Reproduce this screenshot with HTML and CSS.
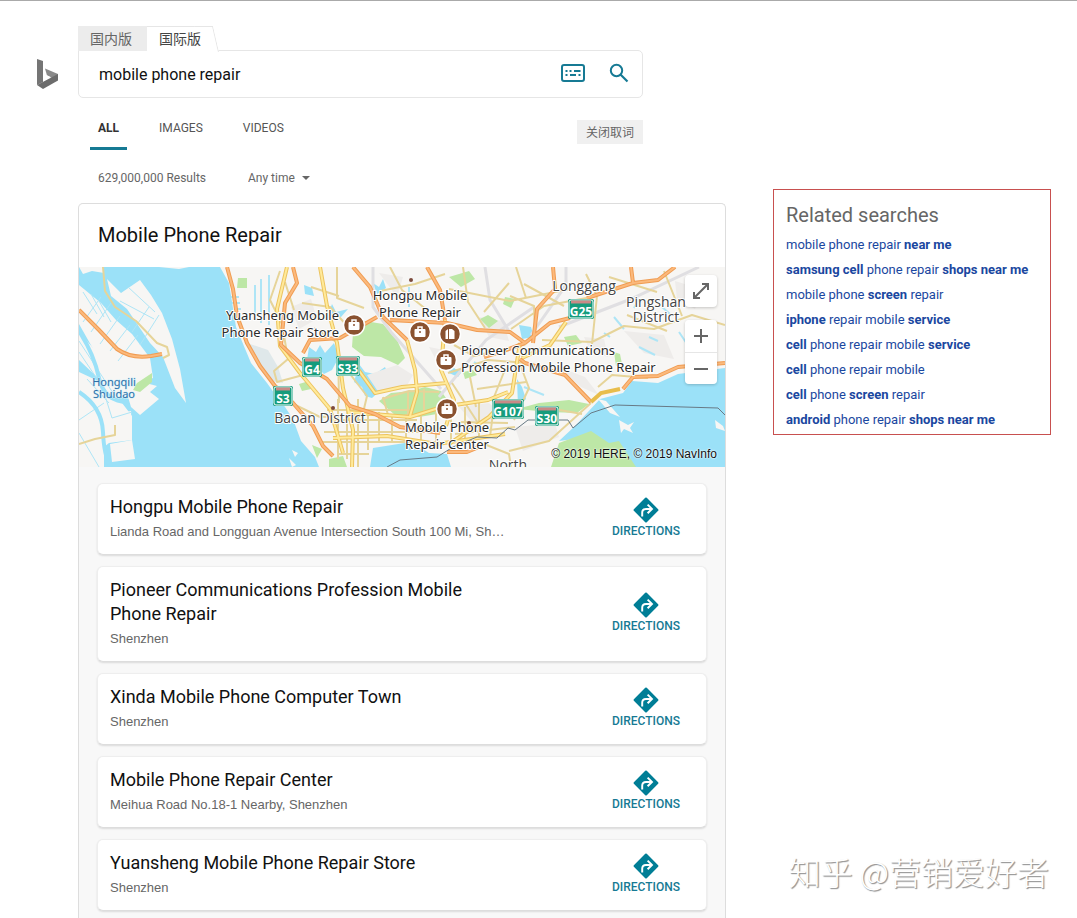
FILE: index.html
```html
<!DOCTYPE html>
<html lang="en">
<head>
  <meta charset="UTF-8">
  <meta name="viewport" content="width=device-width, initial-scale=1.0">
  <title>mobile phone repair - Bing</title>
  <link rel="stylesheet" href="styles.css">
</head>
<body>
  <!-- Shared symbols -->
  <svg class="symbols" aria-hidden="true">
    <symbol id="directions" viewBox="0 0 24 24">
      <path d="M12 1.500L22.500 12 12 22.500 1.500 12z" fill="#007e96" stroke="#007e96" stroke-width="2" stroke-linejoin="round"/>
      <path d="M8.500 18v-3.500q0-3.500 3.500-3.500h5M13.500 7l4 4-4 4" fill="none" stroke="#fff" stroke-width="1.800"/>
    </symbol>
    <symbol id="bag" viewBox="-12 -12 24 24">
      <circle r="10.500" fill="#8a5230" stroke="#fff" stroke-width="1.500"/>
      <path d="M-2-3v-2h4v2" fill="none" stroke="#fff" stroke-width="1.500"/>
      <rect x="-5.500" y="-3" width="11" height="8" rx="1" fill="#fff"/>
      <path d="M-1 0h2" stroke="#8a5230" stroke-width="1.500"/>
    </symbol>
    <symbol id="shop" viewBox="-12 -12 24 24">
      <circle r="10.500" fill="#8a5230" stroke="#fff" stroke-width="1.500"/>
      <path d="M-4.500 5v-8l2.500-2v10zM-1 5v-10h3l2.500 2v8z" fill="#fff"/>
    </symbol>
  </svg>

  <div class="page">
    <a class="logo" href="#" aria-label="Bing">
      <svg width="22" height="30" viewBox="0 0 22 30">
        <path d="M0 0l6 2v21l-6 3z" fill="#757575"/>
        <path d="M8 9.500l13 5.500v6L14 18.500l-4-2z" fill="#8a8a8a"/>
        <path d="M0 26l21-11v6.500L6 30z" fill="#6c6c6c"/>
        <path d="M6 22.500l7.500-4.500-4-2z" fill="#fff"/>
      </svg>
    </a>

    <main class="main">
      <!-- Search -->
      <div class="region-tabs">
        <a class="region-tab" href="#">国内版</a>
        <a class="region-tab active" href="#">国际版</a>
      </div>
      <form class="search-box">
        <input type="text" class="search-input" value="mobile phone repair" aria-label="Search">
        <button type="button" class="icon-btn" aria-label="Keyboard">
          <svg width="24" height="18" viewBox="0 0 24 18">
            <rect x="1" y="1" width="22" height="16" rx="2" fill="none" stroke="#167a94" stroke-width="2"/>
            <path d="M4.500 7h2M8.500 7h2M13 7h6.500M4.500 11h2M9 11h6M17.500 11h2" stroke="#167a94" stroke-width="2"/>
          </svg>
        </button>
        <button type="button" class="icon-btn" aria-label="Search">
          <svg width="20" height="20" viewBox="0 0 20 20" fill="none" stroke="#167a94">
            <circle cx="7.500" cy="7.500" r="5.700" stroke-width="2"/>
            <path d="M11.500 11.500l7 7" stroke-width="2.200"/>
          </svg>
        </button>
      </form>

      <div class="nav-row">
        <nav class="nav">
          <a class="active" href="#">ALL</a>
          <a href="#">IMAGES</a>
          <a href="#">VIDEOS</a>
        </nav>
        <button type="button" class="word-btn">关闭取词</button>
      </div>

      <div class="filters">
        <span>629,000,000 Results</span>
        <div class="time-filter">
          <select aria-label="Time">
            <option>Any time</option>
            <option>Past day</option>
          </select>
        </div>
      </div>

      <!-- Local results -->
      <section class="local">
        <h2>Mobile Phone Repair</h2>
        <div class="map">
          <svg class="map-canvas" viewBox="0 0 646 200" preserveAspectRatio="xMidYMid slice" role="img" aria-label="Map">
            <rect width="646" height="200" fill="#f7f6f4"/>

            <!-- water -->
            <g fill="#9be1f8">
              <path d="M0 0H141L150 16 157 60 172 96 188 116 198 130 206 140 214 152 222 174 236 190 240 200H0z"/>
              <path d="M230 80l7 5 4-7 5 8 9-10 5 14-7 13-8 4-6-6-7 6-4-14zM280 97l6 8 10 2 10-7 3 7-9 8 2 8-9 8-7-2-3-9-8-5zM253 37l4 8 12-3-7 8-13-2zM294 16l6 4 4-8 3 9-9 6zM440 58l12 2 3 10-12 2z"/>
              <path d="M291 200l3-19 38-6 18 11 18 1 4 13z"/>
              <path d="M480 174l16-15 25-27 23-6 9-12 26 2 20-9 47-6v99H555l-44-30z"/>
              <path d="M371 95l5 7 8 1-5 7-9-4zM438 112l5 8 4 12-8 8zM225 18l8 3 2 8-9-2z"/>
            </g>

            <!-- western delta -->
            <g fill="#f7f6f4">
              <path d="M0 0H80l20 2 10-2H25v6l-12-2-9 3zM0 18l22 18 15 17 16 14 18 24 3 20-11 4 15 4-7 6 9 7-19 16-9-8-5-17-18-15-12-21L0 57z"/>
              <path d="M28 12l14 14 19-13 11 15 11 18 10 26 8 30 6 34-11-15-12-31-13-14-23-34-16-13z"/>
              <path d="M0 65l15 17 22 27 16 23-14-2L0 93zM0 105l30 14 23 30v24L30 176 0 200z"/>
              <path d="M30 148l22-4 1 27-21 2zM31 177l22-4 3 19-23 3z"/>
              <path d="M20 145l5 26v29H0v-65z"/>
              <path d="M213 183l6 3-3 4zM210 191l7 7-4 2z"/>
            </g>
            <path d="M4 25l14 22M12 27l13 23M20 34l12 21M4 55l18-25M12 65l20-29M21 77l20-28M31 84l20-26M39 94l20-26M53 65l17-25M61 78l19-30M41 34l34 18M49 20l27 25M0 74l34 52M0 85l25 37M8 112l22 24M22 116l11 35 20-6M0 153l25-17M0 166l20 34" fill="none" stroke="#aee5f6"/>
            <path d="M0 64q15 23 20 47t30 24M0 125q23 15 24 40t8 35" fill="none" stroke="#9be1f8" stroke-width="4"/>
            <path d="M165 75l24 8 10 17 5 16-12-2-13-19z" fill="#dfe8ea"/>

            <!-- built-up areas -->
            <g fill="#eeecea">
              <path d="M212 40l20-8 6 20-18 10zM288 108l30-10 16 10-8 14-26 4zM400 50l24 4 6 20-20-4zM380 140l30-4 16 14-30 8zM480 100l26 10 14 18-18-8zM545 64l40 4 10 24-30-6zM596 14l26 8-6 20-18-10z"/>
              <path d="M436 160l40-4 4 14-36 14zM350 80l20 4-8 18zM300 6l24 4-6 20zM505 70l20 2 4 18-18-6z"/>
            </g>

            <!-- parks and hills -->
            <g fill="#bde7a6">
              <path d="M58 116l15-10v9l-12 10-7-2zM274 66l12-12 18 3 14 16 8 18-7 7-17-8-17-1-12-9z"/>
              <path d="M300 134L312 126 332 124 346 120 362 124 372 138 364 146 340 150 316 148z"/>
              <path d="M438 142L460 136 490 133 510 137 498 146 470 145z"/>
              <path d="M159 11h9v10h-10zM370 10l20-6 6 8-14 8zM401 52l8-4 10 6-9 7zM485 70l12-2 6 8-14 3z"/>
              <path d="M250 192l14-3 4 11h-18zM472 200l8-24 32-12 18 12 10-2 17 26z"/>
              <path d="M384 105l10-2 4 5-12 4zM233 178l10 4-5 9zM220 117l10-3 2 8-9 2zM426 30l10 2-4 9-8-4zM535 85l6 2 2 10-6 2z"/>
            </g>
            <path d="M540 153l9 5 6-3-4 6 3 5-9-4-3 4zM636 153l8 6 2 5-9-3zM519 132l8 2 14 16-10-4z" fill="#f7f6f4"/>
            <path d="M176 18v30M182 12v44M190 8v50M152 30h8M153 36h8M155 42h7M330 20v20M560 32l-5 9M583 40l8 7M535 50l10 12M395 95l14 8M570 70l9 4M600 65l8 12M445 120l20 8M560 80l16 8M525 66l6 4M214 64l6 6" stroke="#aee5f6" stroke-width="2"/>
            <path d="M294 0v40l18 25 50 57M487 0v18l-35 50M406 0l5 33 20 33M620 0l-68 32-72 28M360 130l47-57 48-33" fill="none" stroke="#e0dfe2" stroke-width="3"/>

            <!-- minor roads -->
            <g fill="none" stroke="#e6d499" stroke-width="2" stroke-linejoin="round">
              <path d="M24 0l2 24 10 16 21 14 21 22 10 4 2 8-6 3M0 177l16-5 20-4v-10"/>
              <path d="M201 4l-10 29 12 24 6 35-14 12 3 11 30-8M206 15l9 28M258 0v31l27 10M232 20l28 9M235 61l24 15 1 60M223 36l28 4 21 23M200 130l41 20 50-2M271 107l17 22-4 17"/>
              <path d="M301 24l35-7 30-10M311 0l12 23 25 20M384 0l5 35 17 26M370 22l61 12 60-12M431 29l24 10 1 30M405 45l25-29M432 62l33-23 53-10M463 73l50 2 32-16 30 3 38-14 33 10M507 7l11 22-5 48"/>
              <path d="M304 130l5 18M329 124v26M345 122v26M303 132l27-8 30 1M369 106l40-13 40 3M375 78l20 11 52-12M391 110l6 30M398 122l49-7M373 116l30 46M416 130l-5 40M425 105l-10 25 20 20"/>
              <path d="M248 143h84M248 153h90M245 165h120M240 175h125M260 187h30M259 132v60M268 132v60M279 132v68M289 143v40M300 145v30M313 149v27M327 147v27M342 148v30M357 145v36M372 142v34M386 140v34M400 133v36M379 155l50 1M376 167l60-7"/>
              <path d="M437 0l10 31M445 17l40 22M530 10l48 15M548 48l40 16M585 4l18 45M430 184l40-10 42-38M400 175l30 12 2 13M442 100l8 21-15 32M519 120l14-12 36 3M475 142l28 5"/>
            </g>

            <!-- yellow roads -->
            <path class="road-casing" d="M208 0l-10 42 3 37 20 27 30 36 13 44M241 0l7 39 10 37 6 45 10 42-1 37M269 145l62 5 32-10 46-7 20-8M276 98l20 28 27-6 45-4M328 73l8 30 2 22-7 24M366 53l-4 50 13 30-8 26M254 171l54-2 50 8 68-10M441 76l-8 50-23 24-40 27M487 55l-16 23-28 13"/>
            <path class="road" d="M208 0l-10 42 3 37 20 27 30 36 13 44M241 0l7 39 10 37 6 45 10 42-1 37M269 145l62 5 32-10 46-7 20-8M276 98l20 28 27-6 45-4M328 73l8 30 2 22-7 24M366 53l-4 50 13 30-8 26M254 171l54-2 50 8 68-10M441 76l-8 50-23 24-40 27M487 55l-16 23-28 13"/>

            <!-- highways -->
            <g class="highway">
              <path id="hw" d="M0 43l20 20 18 19q14 10 34 7l11-2M148 0l6 22 4 27 10 27 13 23 15 20 18 17 20 23 10 20 10 10M214 0l4 16-12 20-4 42 19 18 27 16 23 27 25 8 25 13 40 6M224 86l7-13 30-2 37-21M274 0l17 20 13 30 24 23M348 0l13 23 5 30M311 53l57 3 30 7 33 2 15 11M474 0l2 22-18 20-4 34M446 76l25-20 20-5M508 31l46-15-2-16M554 16l25-3 17-13M441 92l5 4 40 12 26 27M544 122l10-12 25-1 20-9 47-4M405 90l22-7 19-7M368 185h20l12-5"/>
            </g>
            <use class="highway-core" href="#hw"/>
            <path d="M512 135l10-9 19-4" fill="none" stroke="#e8bd4b" stroke-width="4"/>
            <path d="M308 200l13-7 37-3 16-10 24-10 20 1 11-10 7 2 13-10h40l5 8 18-15 24-8 103 3 7 7" fill="none" stroke="#687a86"/>

            <!-- road shields -->
            <g class="shield">
              <g><rect x="223" y="90" width="20" height="20" rx="2"/><rect class="inner" x="224" y="91" width="18" height="18" rx="2"/><path d="M226 93h14"/><text x="233" y="107">G4</text></g>
              <g><rect x="257" y="89" width="24" height="20" rx="2"/><rect class="inner" x="258" y="90" width="22" height="18" rx="2"/><path d="M260 92h18"/><text x="269" y="106">S33</text></g>
              <g><rect x="194" y="119" width="20" height="20" rx="2"/><rect class="inner" x="195" y="120" width="18" height="18" rx="2"/><path d="M197 122h14"/><text x="204" y="136">S3</text></g>
              <g><rect x="413" y="132" width="32" height="20" rx="2"/><rect class="inner" x="414" y="133" width="30" height="18" rx="2"/><path d="M416 135h26"/><text x="429" y="149">G107</text></g>
              <g><rect x="456" y="139" width="24" height="20" rx="2"/><rect class="inner" x="457" y="140" width="22" height="18" rx="2"/><path d="M459 142h18"/><text x="468" y="156">S30</text></g>
              <g><rect x="489" y="32" width="26" height="20" rx="2"/><rect class="inner" x="490" y="33" width="24" height="18" rx="2"/><path d="M492 35h20"/><text x="502" y="49">G25</text></g>
            </g>

            <g fill="#7c4a3b">
              <circle cx="332" cy="13" r="2"/><circle cx="254" cy="141" r="2"/><circle cx="390" cy="156" r="2"/>
            </g>

            <use href="#bag" x="263" y="46" width="24" height="24"/>
            <use href="#bag" x="329" y="53" width="24" height="24"/>
            <use href="#shop" x="359" y="55" width="24" height="24"/>
            <use href="#bag" x="355" y="81" width="24" height="24"/>
            <use href="#bag" x="356" y="130" width="24" height="24"/>

            <g class="place">
              <text x="341" y="33">Hongpu Mobile</text>
              <text x="341" y="50">Phone Repair</text>
              <text class="end" x="260" y="53">Yuansheng Mobile</text>
              <text class="end" x="260" y="70">Phone Repair Store</text>
              <text class="start" x="382" y="88">Pioneer Communications</text>
              <text class="start" x="382" y="105">Profession Mobile Phone Repair</text>
              <text x="368" y="165">Mobile Phone</text>
              <text x="368" y="182">Repair Center</text>
            </g>
            <g class="place district">
              <text x="505" y="24">Longgang</text>
              <text x="577" y="40">Pingshan</text>
              <text x="577" y="55">District</text>
              <text x="241" y="156">Baoan District</text>
              <text x="429" y="203">North</text>
            </g>
            <g class="place water-name">
              <text x="35" y="119">Hongqili</text>
              <text x="35" y="131">Shuidao</text>
            </g>
          </svg>

          <button type="button" class="map-btn expand" aria-label="Expand map">
            <svg width="18" height="18" viewBox="0 0 18 18" fill="none" stroke="#666" stroke-width="2">
              <path d="M2 16L16 2M10 2h6v6M2 10v6h6"/>
            </svg>
          </button>
          <div class="zoom">
            <button type="button" class="map-btn" aria-label="Zoom in">
              <svg width="14" height="14" viewBox="0 0 14 14" stroke="#666" stroke-width="2"><path d="M0 7h14M7 0v14"/></svg>
            </button>
            <button type="button" class="map-btn" aria-label="Zoom out">
              <svg width="14" height="14" viewBox="0 0 14 14" stroke="#666" stroke-width="2"><path d="M0 7h14"/></svg>
            </button>
          </div>
          <span class="copyright">© 2019 HERE, © 2019 NavInfo</span>
        </div>

        <div class="cards">
          <article class="card">
            <div class="card-text">
              <h3>Hongpu Mobile Phone Repair</h3>
              <p>Lianda Road and Longguan Avenue Intersection South 100 Mi, Shenzhen</p>
            </div>
            <a class="directions" href="#"><svg width="26" height="26"><use href="#directions"/></svg>DIRECTIONS</a>
          </article>
          <article class="card">
            <div class="card-text">
              <h3>Pioneer Communications Profession Mobile Phone Repair</h3>
              <p>Shenzhen</p>
            </div>
            <a class="directions" href="#"><svg width="26" height="26"><use href="#directions"/></svg>DIRECTIONS</a>
          </article>
          <article class="card">
            <div class="card-text">
              <h3>Xinda Mobile Phone Computer Town</h3>
              <p>Shenzhen</p>
            </div>
            <a class="directions" href="#"><svg width="26" height="26"><use href="#directions"/></svg>DIRECTIONS</a>
          </article>
          <article class="card">
            <div class="card-text">
              <h3>Mobile Phone Repair Center</h3>
              <p>Meihua Road No.18-1 Nearby, Shenzhen</p>
            </div>
            <a class="directions" href="#"><svg width="26" height="26"><use href="#directions"/></svg>DIRECTIONS</a>
          </article>
          <article class="card">
            <div class="card-text">
              <h3>Yuansheng Mobile Phone Repair Store</h3>
              <p>Shenzhen</p>
            </div>
            <a class="directions" href="#"><svg width="26" height="26"><use href="#directions"/></svg>DIRECTIONS</a>
          </article>
        </div>
      </section>
    </main>

    <!-- Related searches -->
    <aside class="related">
      <h2>Related searches</h2>
      <ul>
        <li><a href="#">mobile phone repair <b>near me</b></a></li>
        <li><a href="#"><b>samsung cell</b> phone repair <b>shops near me</b></a></li>
        <li><a href="#">mobile phone <b>screen</b> repair</a></li>
        <li><a href="#"><b>iphone</b> repair mobile <b>service</b></a></li>
        <li><a href="#"><b>cell</b> phone repair mobile <b>service</b></a></li>
        <li><a href="#"><b>cell</b> phone repair mobile</a></li>
        <li><a href="#"><b>cell</b> phone <b>screen</b> repair</a></li>
        <li><a href="#"><b>android</b> phone repair <b>shops near me</b></a></li>
      </ul>
    </aside>
  </div>

  <div class="watermark">知乎 @营销爱好者</div>
</body>
</html>
```

FILE: styles.css
```css
* {
  margin: 0;
  padding: 0;
  box-sizing: border-box;
}

:root {
  --teal: #167a94;
  --text: #111;
  --muted: #666;
  --line: #ddd;
}

body {
  font-family: Roboto, "Noto Sans CJK SC", sans-serif;
  font-size: 12px;
  color: var(--text);
  background: #fff;
  border-top: 1px solid #aaa;
}

a {
  color: inherit;
  text-decoration: none;
}

button {
  font-family: inherit;
  border: none;
  background: none;
  cursor: pointer;
}

svg {
  display: block;
}

.symbols {
  position: absolute;
  width: 0;
  height: 0;
}

.page {
  display: grid;
  grid-template-columns: 78px minmax(0, 1fr) 278px;
  padding-right: 26px;
  min-height: calc(100vh - 1px);
}

.logo {
  padding: 58px 0 0 37px;
}

.main {
  display: flex;
  flex-direction: column;
  padding-top: 25px;
}

/* Search */
.region-tabs {
  display: flex;
  height: 25px;
  margin-bottom: -1px;
}

.region-tab {
  position: relative;
  width: 69px;
  padding-left: 12px;
  font-size: 14px;
  line-height: 26px;
  color: var(--muted);
  background: #ececec;
}

.region-tab.active {
  z-index: 1;
  width: 58px;
  line-height: 24px;
  color: #444;
  background: #fff;
  border-top: 1px solid #e6e6e6;
}

.region-tab.active::after {
  content: "";
  position: absolute;
  z-index: -1;
  top: -1px;
  left: 40px;
  width: 28px;
  height: 25px;
  background: #fff;
  border: 1px solid #e6e6e6;
  border-width: 1px 1px 0 0;
  transform: skewX(13deg);
  clip-path: inset(0 0 0 10px);
}

.search-box {
  display: flex;
  align-items: center;
  gap: 22px;
  max-width: 565px;
  height: 48px;
  padding: 0 11px 0 20px;
  border: 1px solid #e6e6e6;
  border-radius: 0 5px 5px 5px;
}

.search-input {
  flex: 1;
  min-width: 0;
  border: none;
  outline: none;
  font-family: inherit;
  font-size: 16px;
  color: var(--text);
}

.icon-btn {
  display: flex;
  justify-content: center;
  min-width: 24px;
  padding-bottom: 2px;
}

/* Navigation */
.nav-row {
  display: flex;
  align-items: center;
  justify-content: space-between;
  max-width: 565px;
  margin-top: 9px;
}

.nav {
  display: flex;
  gap: 24px;
  padding-left: 12px;
}

.nav a {
  padding: 3px 8px 0;
  line-height: 37px;
  color: #555;
  border-bottom: 3px solid transparent;
}

.nav a.active {
  font-weight: 700;
  color: #333;
  border-color: var(--teal);
}

.word-btn {
  height: 24px;
  margin-top: 6px;
  padding: 0 9px;
  font-size: 12px;
  color: var(--muted);
  background: #f0f0f0;
}

.filters {
  display: flex;
  gap: 42px;
  padding: 16px 0 13px 20px;
  line-height: 24px;
  color: var(--muted);
}

.time-filter {
  position: relative;
}

.time-filter::after {
  content: "";
  position: absolute;
  right: 0;
  top: 10px;
  border: 4px solid transparent;
  border-top-color: var(--muted);
  pointer-events: none;
}

.time-filter select {
  appearance: none;
  height: 24px;
  padding-right: 15px;
  border: none;
  background: none;
  font-family: inherit;
  font-size: 12px;
  color: inherit;
}

/* Local results */
.local {
  flex: 1;
  max-width: 648px;
  border: 1px solid var(--line);
  border-bottom: none;
  border-radius: 5px 5px 0 0;
  background: #f8f8f8;
}

.local h2 {
  padding: 0 19px;
  font-size: 20px;
  font-weight: 400;
  line-height: 63px;
  background: #fff;
  border-radius: 5px 5px 0 0;
}

/* Map */
.map {
  position: relative;
  height: 200px;
  overflow: hidden;
}

.map-canvas {
  width: 100%;
  height: 100%;
}

.road-casing,
.road {
  fill: none;
  stroke: #ecc35f;
  stroke-width: 4px;
  stroke-linejoin: round;
}

.road {
  stroke: #ffea9a;
  stroke-width: 2px;
}

.highway {
  fill: none;
  stroke: #f09c52;
  stroke-width: 4px;
  stroke-linejoin: round;
}

.highway-core {
  fill: none;
  stroke: #fbb97c;
  stroke-width: 2px;
  stroke-linejoin: round;
}

.place text {
  font-family: "Noto Sans", sans-serif;
  font-size: 13px;
  text-anchor: middle;
  fill: #2b2b2b;
  stroke: #fff;
  stroke-width: 2px;
  stroke-linejoin: round;
  paint-order: stroke;
}

.place .start {
  text-anchor: start;
}

.place .end {
  text-anchor: end;
}

.district text {
  font-family: "Open Sans", sans-serif;
  font-size: 14px;
  fill: #444;
}

.water-name text {
  font-size: 11px;
  fill: #2f6fa8;
  stroke: #cdeffa;
  stroke-width: 1px;
}

.shield rect {
  fill: #159c7c;
}

.shield .inner {
  stroke: #fff;
  stroke-width: 1px;
}

.shield path {
  stroke: #c98a86;
  stroke-width: 3px;
}

.shield text {
  font-family: "Noto Sans", sans-serif;
  font-size: 12px;
  font-weight: 700;
  text-anchor: middle;
  fill: #fff;
}

.map-btn {
  display: flex;
  align-items: center;
  justify-content: center;
  width: 32px;
  height: 32px;
  background: #fff;
}

.expand {
  position: absolute;
  top: 8px;
  right: 8px;
  border-radius: 4px;
  box-shadow: 0 1px 3px rgba(0, 0, 0, 0.2);
}

.zoom {
  position: absolute;
  top: 53px;
  right: 8px;
  border-radius: 4px;
  overflow: hidden;
  box-shadow: 0 1px 3px rgba(0, 0, 0, 0.2);
}

.zoom .map-btn + .map-btn {
  border-top: 1px solid #e6e6e6;
}

.copyright {
  position: absolute;
  right: 8px;
  bottom: 5px;
  font-family: "Liberation Sans", Arial, sans-serif;
  line-height: 16px;
  text-shadow: 0 0 2px #fff, 0 0 2px #fff;
}

/* Result cards */
.cards {
  display: flex;
  flex-direction: column;
  gap: 11px;
  padding: 16px 18px 7px;
}

.card {
  display: flex;
  align-items: center;
  justify-content: space-between;
  padding: 11px 26px 11px 12px;
  background: #fff;
  border: 1px solid #eee;
  border-bottom-color: #ddd;
  border-radius: 6px;
  box-shadow: 0 1px 2px rgba(0, 0, 0, 0.12);
}

.card-text {
  width: 396px;
  min-width: 0;
}

.card h3 {
  font-size: 18px;
  font-weight: 400;
  line-height: 24px;
}

.card p {
  padding-top: 2px;
  overflow: hidden;
  white-space: nowrap;
  text-overflow: ellipsis;
  font-family: "Liberation Sans", Arial, sans-serif;
  font-size: 13px;
  line-height: 22px;
  color: var(--muted);
}

.directions {
  display: flex;
  flex-direction: column;
  align-items: center;
  padding-bottom: 2px;
  font-weight: 500;
  line-height: 16px;
  color: var(--teal);
}

/* Related searches */
.related {
  align-self: start;
  margin-top: 188px;
  padding: 13px 12px 2px;
  border: 1px solid #c8504f;
}

.related h2 {
  margin-bottom: 5px;
  font-size: 20px;
  font-weight: 400;
  line-height: 24px;
  color: var(--muted);
}

.related ul {
  list-style: none;
}

.related li {
  font-size: 13px;
  line-height: 25px;
  color: #1a47a0;
  white-space: nowrap;
}

.watermark {
  position: absolute;
  right: 28px;
  bottom: 24px;
  font-family: "Noto Sans CJK SC", sans-serif;
  font-size: 32px;
  font-weight: 300;
  line-height: 46px;
  color: #fff;
  text-shadow: 1px 1px 1px #999, 1px 1px 1px #aaa;
}
```
